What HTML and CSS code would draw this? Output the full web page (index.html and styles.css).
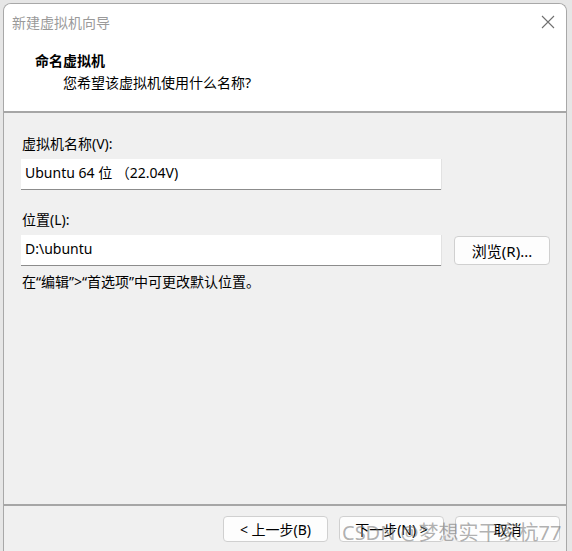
FILE: index.html
```html
<!doctype html>
<html>
  <head>
    <title>新建虚拟机向导</title>
    <link rel="stylesheet" href="styles.css">
  </head>
  <body>
    <div class="fenetre">
      <div class="entete">
        <div class="barre_titre">
          <span class="titre">新建虚拟机向导</span>
          <svg class="fermer" width="14" height="14" viewBox="0 0 14 14">
            <path d="M1 1 L13 13 M13 1 L1 13" stroke="#707070" stroke-width="1.1" fill="none"/>
          </svg>
        </div>
        <div class="titre_etape">命名虚拟机</div>
        <div class="sous_titre">您希望该虚拟机使用什么名称?</div>
      </div>

      <div class="contenu">
        <div class="etiquette">虚拟机名称(V):</div>
        <div class="ligne">
          <div class="champ">Ubuntu 64 位 （22.04V)</div>
        </div>

        <div class="etiquette deuxieme">位置(L):</div>
        <div class="ligne">
          <div class="champ">D:\ubuntu</div>
          <button class="bouton parcourir">浏览(R)...</button>
        </div>
        <div class="remarque">在“编辑”&gt;“首选项”中可更改默认位置。</div>
      </div>

      <div class="pied">
        <button class="bouton">&lt; 上一步(B)</button>
        <button class="bouton">下一步(N) &gt;</button>
        <button class="bouton">取消</button>
        <span class="filigrane">CSDN @梦想实干家杭77</span>
      </div>
    </div>
  </body>
</html>
```

FILE: styles.css
```css
body {
  margin: 0;
  background-color: #e6e6e6;
  font-family: "Segoe UI", "Noto Sans", "Noto Sans CJK SC", sans-serif;
  font-size: 14px;
  color: #000;
  overflow: hidden;
}

.fenetre {
  margin: 3px 0 0 3px;
  width: 562px;
  height: 560px;
  background-color: #f0f0f0;
  border: 1px solid #a8a8a8;
  border-bottom: none;
  border-radius: 8px 8px 0 0;
  overflow: hidden;
  position: relative;
}

.entete {
  background-color: white;
  border-bottom: 2px solid #a6a6a6;
  height: 107px;
}

.barre_titre {
  height: 35px;
  display: flex;
  align-items: center;
  justify-content: space-between;
  padding: 0 8px 0 8px;
}

.titre {
  color: #9a9a9a;
  font-size: 14px;
}

.fermer {
  margin-right: 3px;
}

.titre_etape {
  font-weight: bold;
  line-height: 20px;
  margin: 12px 0 0 31px;
}

.sous_titre {
  line-height: 20px;
  margin: 2px 0 0 59px;
}

.contenu {
  height: 393px;
  padding: 21px 0 0 17px;
  box-sizing: border-box;
  border-bottom: 2px solid #a6a6a6;
}

.etiquette {
  line-height: 20px;
  padding-left: 1px;
}

.etiquette.deuxieme {
  margin-top: 20px;
}

.ligne {
  display: flex;
  align-items: center;
  gap: 13px;
  margin-top: 5px;
}

.champ {
  width: 416px;
  height: 30px;
  line-height: 28px;
  padding-left: 4px;
  background-color: white;
  border-bottom: 1px solid #8c8c8c;
  box-shadow: 1px 0 0 #e2e2e2;
}

.bouton {
  width: 105px;
  height: 26px;
  background-color: #fdfdfd;
  border: 1px solid #d0d0d0;
  border-radius: 4px;
  font-family: "Segoe UI", "Noto Sans", "Noto Sans CJK SC", sans-serif;
  font-size: 14px;
  color: #000;
  padding: 0;
}

.parcourir {
  width: 96px;
  height: 29px;
  font-size: 15px;
}

.remarque {
  line-height: 20px;
  margin-top: 6px;
  padding-left: 1px;
}

.pied {
  display: flex;
  gap: 11px;
  padding: 10px 0 0 219px;
  position: relative;
}

.filigrane {
  position: absolute;
  left: 338px;
  top: 11px;
  font-size: 20px;
  color: rgba(110, 110, 110, 0.55);
  white-space: nowrap;
}
```
